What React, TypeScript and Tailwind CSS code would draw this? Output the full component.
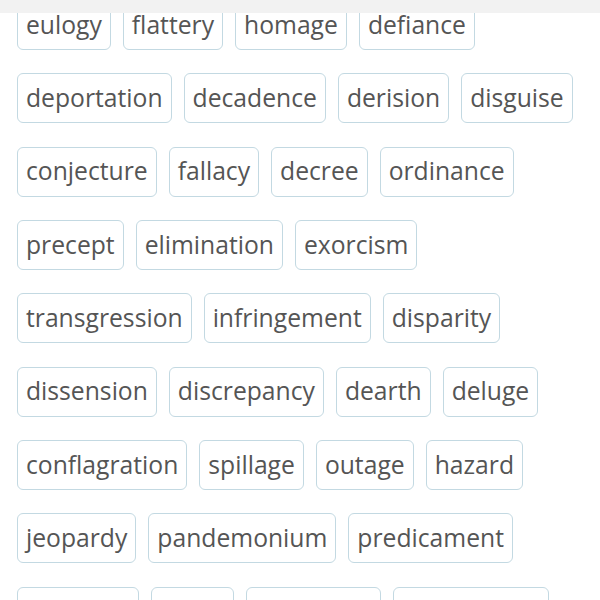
const rows: string[][] = [
  ["eulogy", "flattery", "homage", "defiance"],
  ["deportation", "decadence", "derision", "disguise"],
  ["conjecture", "fallacy", "decree", "ordinance"],
  ["precept", "elimination", "exorcism"],
  ["transgression", "infringement", "disparity"],
  ["dissension", "discrepancy", "dearth", "deluge"],
  ["conflagration", "spillage", "outage", "hazard"],
  ["jeopardy", "pandemonium", "predicament"],
  ["adversity", "plight", "upheavals", "catastrophe"],
];

function Chip({ word }: { word: string }) {
  return (
    <div className="h-[50px] px-2 flex items-center rounded-[6px] border-[1.5px] border-[#c3d9e2] bg-white text-[24.7px] leading-none text-[#555555] whitespace-nowrap">
      {word}
    </div>
  );
}

export default function App() {
  return (
    <div
      className="w-[600px] h-[600px] bg-white overflow-hidden flex flex-col"
      style={{ fontFamily: '"Open Sans", "Noto Sans", sans-serif' }}
    >
      <div className="h-[13px] shrink-0 bg-[#f2f2f2] relative z-10" />
      <div className="flex-1 overflow-hidden">
        <div className="-mt-[13px] pl-[17px] flex flex-col gap-[23.33px]">
          {rows.map((row, i) => (
            <div key={i} className="flex gap-[12px]">
              {row.map((w) => (
                <Chip key={w} word={w} />
              ))}
            </div>
          ))}
        </div>
      </div>
    </div>
  );
}
